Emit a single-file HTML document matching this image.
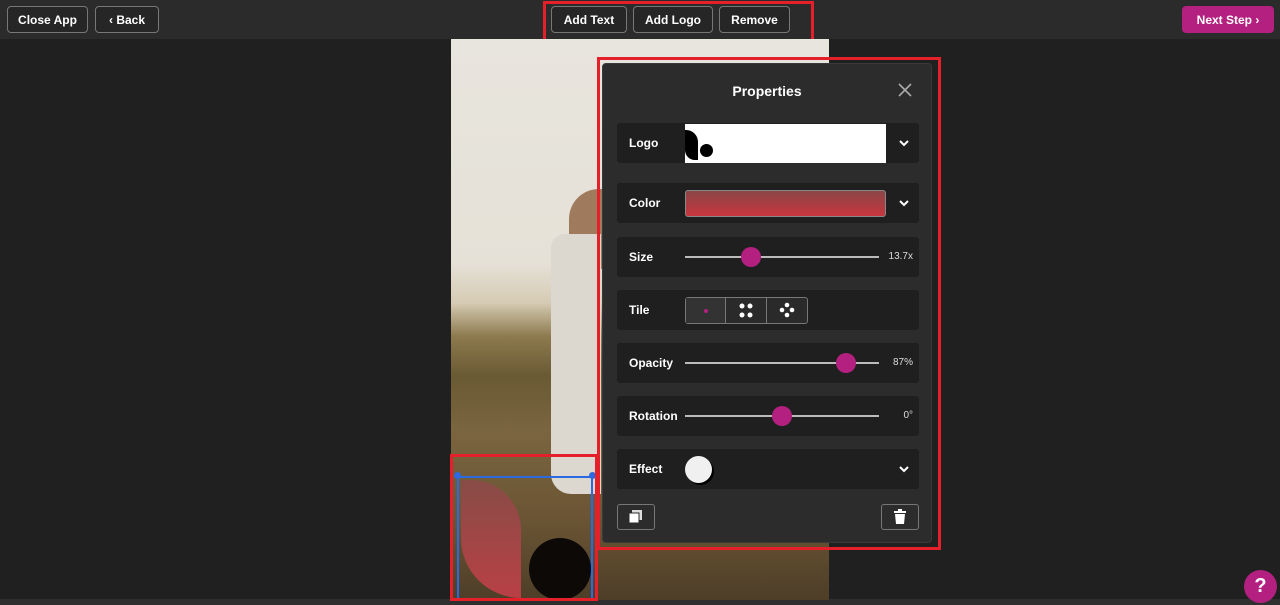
<!DOCTYPE html>
<html><head><style>
*{box-sizing:border-box;margin:0;padding:0}
body{width:1280px;height:605px;background:#202020;font-family:"Liberation Sans",sans-serif;color:#fff;position:relative;overflow:hidden}
.top{position:absolute;left:0;top:0;width:1280px;height:39px;background:#2b2b2b}
.btn{position:absolute;top:6px;height:27px;border:1px solid #777;border-radius:4px;background:#262626;color:#fff;font-size:12px;font-weight:bold;display:flex;align-items:center;justify-content:center}
.red{position:absolute;border:3px solid #e5202a}
.img{position:absolute;left:451px;top:39px;width:378px;height:561px;overflow:hidden;background:linear-gradient(180deg,#e8e5de 0%,#e5e1d7 40%,#d6cbb4 47%,#8d7a4e 53%,#6a5a34 60%,#7a6540 70%,#6b5534 85%,#4e3e28 100%)}
.panel{position:absolute;left:602px;top:63px;width:330px;height:480px;background:#2c2c2c;border:1px solid #3a3a3a;border-radius:4px}
.row{position:absolute;left:14px;width:302px;height:40px;background:#1f1f1f;border-radius:3px;font-size:12px;font-weight:bold}
.row .l{position:absolute;left:12px;top:13px}
.track{position:absolute;left:68px;width:194px;top:19px;height:2px;background:#bbb}
.knob{position:absolute;top:10px;width:20px;height:20px;border-radius:50%;background:#b3207f}
.val{position:absolute;right:6px;top:14px;font-size:10px;font-weight:normal;color:#ddd}
.chev{position:absolute;right:8px;top:13px;width:14px;height:14px}
</style></head><body>
<div class="top"></div>
<div class="btn" style="left:7px;width:81px">Close App</div>
<div class="btn" style="left:95px;width:64px">&#8249;&nbsp;Back</div>
<div class="btn" style="left:551px;width:76px">Add Text</div>
<div class="btn" style="left:633px;width:80px">Add Logo</div>
<div class="btn" style="left:719px;width:71px">Remove</div>
<div class="btn" style="left:1182px;width:92px;background:#b3207f;border-color:#b3207f">Next Step&nbsp;&#8250;</div>
<div class="red" style="left:543px;top:1px;width:271px;height:42px"></div>
<div style="position:absolute;left:0;top:599px;width:1280px;height:6px;background:#2f2f2f"></div>
<div class="img">
 <div style="position:absolute;left:118px;top:150px;width:40px;height:80px;background:#a07a5c;border-radius:30px 0 0 10px"></div>
 <div style="position:absolute;left:100px;top:195px;width:50px;height:260px;background:#dcd8cf;border-radius:14px 0 0 20px"></div>
</div>
<div style="position:absolute;left:461px;top:480px;width:60px;height:118px;background:linear-gradient(180deg,#8a4a48,#c44048);border-radius:0 50px 0 60px;opacity:.9"></div>
<div style="position:absolute;left:529px;top:538px;width:62px;height:62px;border-radius:50%;background:#0c0906"></div>
<div style="position:absolute;left:457px;top:476px;width:136px;height:124px;border:2px solid #2b6ae0;border-bottom:none"></div>
<div style="position:absolute;left:454px;top:472px;width:7px;height:7px;border-radius:50%;background:#2b6ae0"></div>
<div style="position:absolute;left:589px;top:472px;width:7px;height:7px;border-radius:50%;background:#2b6ae0"></div>
<div class="red" style="left:450px;top:454px;width:148px;height:147px"></div>
<div class="panel">
 <div style="position:absolute;left:0;width:100%;top:19px;text-align:center;font-size:14px;font-weight:bold">Properties</div>
 <svg style="position:absolute;left:295px;top:19px" width="14" height="14"><path d="M1 1L13 13M13 1L1 13" stroke="#aaa" stroke-width="1.6"/></svg>
 <div class="row" style="top:59px"><span class="l">Logo</span>
  <div style="position:absolute;left:68px;top:1px;width:201px;height:39px;background:#fff;overflow:hidden">
   <div style="position:absolute;left:0;top:6px;width:13px;height:30px;background:#000;border-radius:0 12px 0 10px"></div>
   <div style="position:absolute;left:15px;top:20px;width:13px;height:13px;border-radius:50%;background:#000"></div>
  </div>
  <svg class="chev" viewBox="0 0 14 14"><path d="M3 5l4 4 4-4" stroke="#fff" stroke-width="2" fill="none"/></svg></div>
 <div class="row" style="top:119px"><span class="l">Color</span>
  <div style="position:absolute;left:68px;top:7px;width:201px;height:27px;border:1px solid #888;border-radius:3px;background:linear-gradient(180deg,#8a4646,#c8363f)"></div>
  <svg class="chev" viewBox="0 0 14 14"><path d="M3 5l4 4 4-4" stroke="#fff" stroke-width="2" fill="none"/></svg></div>
 <div class="row" style="top:173px"><span class="l">Size</span><div class="track"></div><div class="knob" style="left:124px"></div><span class="val">13.7x</span></div>
 <div class="row" style="top:226px"><span class="l">Tile</span>
  <div style="position:absolute;left:68px;top:7px;width:123px;height:27px;border:1px solid #777;border-radius:3px;display:flex;background:#2a2a2a">
   <div style="flex:1;border-right:1px solid #777;background:#333;position:relative"><i style="position:absolute;left:18px;top:11px;width:4px;height:4px;border-radius:50%;background:#b3207f"></i></div>
   <div style="flex:1;border-right:1px solid #777;position:relative"><svg width="40" height="25"><g fill="#fff"><circle cx="16" cy="8" r="2.5"/><circle cx="24" cy="8" r="2.5"/><circle cx="16" cy="17" r="2.5"/><circle cx="24" cy="17" r="2.5"/></g></svg></div>
   <div style="flex:1;position:relative"><svg width="40" height="25"><g fill="#fff"><circle cx="20" cy="7" r="2.3"/><circle cx="15" cy="12" r="2.3"/><circle cx="25" cy="12" r="2.3"/><circle cx="20" cy="17" r="2.3"/></g></svg></div>
  </div></div>
 <div class="row" style="top:279px"><span class="l">Opacity</span><div class="track"></div><div class="knob" style="left:219px"></div><span class="val">87%</span></div>
 <div class="row" style="top:332px"><span class="l">Rotation</span><div class="track"></div><div class="knob" style="left:155px"></div><span class="val">0°</span></div>
 <div class="row" style="top:385px"><span class="l">Effect</span>
  <div style="position:absolute;left:68px;top:7px;width:27px;height:27px;border-radius:50%;background:#f0f0f0;box-shadow:2px 2px 0 #000"></div>
  <svg class="chev" viewBox="0 0 14 14"><path d="M3 5l4 4 4-4" stroke="#fff" stroke-width="2" fill="none"/></svg></div>
 <div style="position:absolute;left:14px;top:440px;width:38px;height:26px;border:1px solid #777;border-radius:3px">
  <svg width="36" height="24"><rect x="14" y="5" width="10" height="10" fill="#ddd"/><rect x="11" y="8" width="10" height="10" fill="#fff" stroke="#2c2c2c"/></svg></div>
 <div style="position:absolute;left:278px;top:440px;width:38px;height:26px;border:1px solid #777;border-radius:3px">
  <svg width="36" height="24"><rect x="12" y="6" width="12" height="2" fill="#fff"/><rect x="16" y="4" width="4" height="2" fill="#fff"/><path d="M13 9h10l-1 10h-8z" fill="#fff"/></svg></div>
</div>
<div class="red" style="left:597px;top:57px;width:344px;height:493px"></div>
<div style="position:absolute;left:1244px;top:570px;width:33px;height:33px;border-radius:50%;background:#b3207f;font-size:20px;font-weight:bold;text-align:center;line-height:33px">?</div>
</body></html>
